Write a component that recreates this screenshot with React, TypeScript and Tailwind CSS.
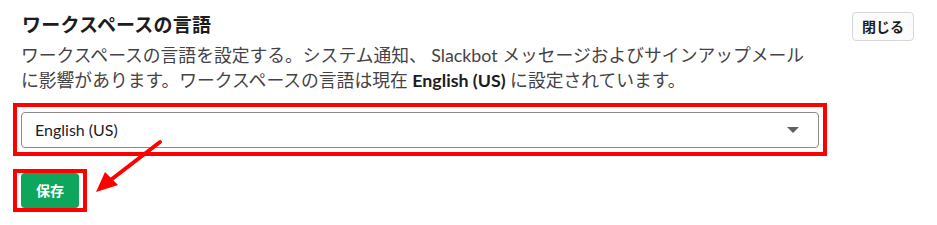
import React from "react";

export default function App() {
  return (
    <div
      className="relative w-[937px] h-[225px] bg-white overflow-hidden text-[#1d1c1d]"
      style={{ fontFamily: 'Lato, "Noto Sans CJK JP", sans-serif' }}
    >
      <div className="flex items-start justify-between pl-[22px] pr-[23px] pt-[12px]">
        <h1 className="text-[19px] font-bold leading-[26px] tracking-[0.2px]">ワークスペースの言語</h1>
        <button className="h-[29px] px-[9px] border border-[#d6d6d6] rounded-[4px] bg-[#fcfcfc] text-[14px] font-bold leading-none text-[#1d1c1d]">
          閉じる
        </button>
      </div>
      <p className="ml-[21px] mt-[2px] text-[17.8px] leading-[25px] text-[#454245] whitespace-nowrap">
        ワークスペースの言語を設定する。システム通知、 Slackbot メッセージおよびサインアップメール
        <br />
        に影響があります。ワークスペースの言語は現在 <b className="font-bold text-[#1d1c1d]">English (US)</b> に設定されています。
      </p>
      <div className="ml-[13px] mt-[10px] w-[814px] border-4 border-[#ff0000] pt-[5px] px-[4px] pb-[4px]">
        <div className="h-[36px] border border-[#8a8a8a] rounded-[4px] flex items-center justify-between pl-[13px] pr-[19px]">
          <span className="text-[16px] text-[#1d1c1d]">English (US)</span>
          <svg width="12" height="6" viewBox="0 0 12 6">
            <polygon points="0,0 12,0 6,6" fill="#616061" />
          </svg>
        </div>
      </div>
      <div className="ml-[13px] mt-[13px] w-[74px] border-4 border-[#ff0000] px-[4px]">
        <button className="w-[58px] h-[35px] bg-[#0ea65c] rounded-[4px] text-white text-[14px] font-bold leading-none">
          保存
        </button>
      </div>
      <svg className="absolute left-0 top-0 pointer-events-none" width="937" height="225">
        <line x1="160" y1="142" x2="112" y2="179" stroke="#ff0000" strokeWidth="4" strokeLinecap="round" />
        <polygon points="96,192 105,172 118,185" fill="#ff0000" />
      </svg>
    </div>
  );
}
